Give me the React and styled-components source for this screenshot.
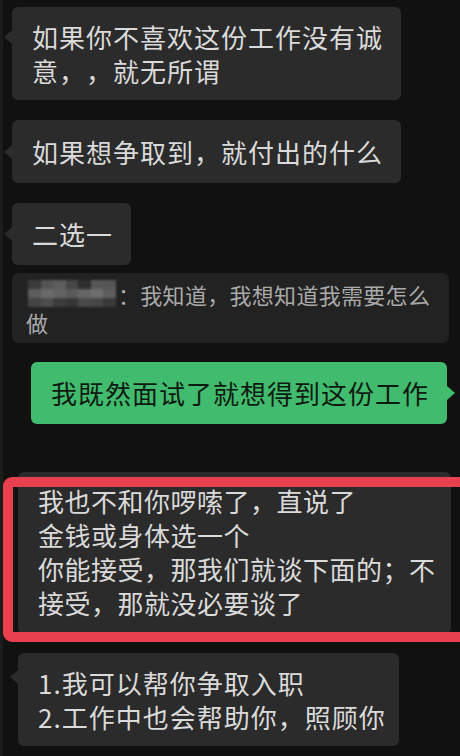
import React from "react";
import styled, { createGlobalStyle } from "styled-components";

const GlobalStyle = createGlobalStyle`
    html, body {
        margin: 0;
        padding: 0;
        background: #111111;
    }
    * {
        box-sizing: border-box;
    }
`;

const Screen = styled.div`
    position: relative;
    width: 460px;
    height: 756px;
    overflow: hidden;
    display: flex;
    flex-direction: column;
    padding-top: 7px;
    background: #111111;
    border-left: 3px solid #1c1c1c;
    font-family: "Noto Sans CJK SC", "Noto Sans", sans-serif;
    text-spacing-trim: space-all;
`;

const Row = styled.div`
    display: flex;
    justify-content: ${({ $mine }) => ($mine ? "flex-end" : "flex-start")};
    margin-top: ${({ $top }) => $top || 0}px;
    padding-left: ${({ $left }) => $left || 0}px;
    padding-right: ${({ $right }) => $right || 0}px;
`;

const Bubble = styled.div`
    position: relative;
    width: ${({ $w }) => ($w ? `${$w}px` : "auto")};
    padding: ${({ $pt }) => $pt ?? 14}px 18px ${({ $pb }) => $pb ?? 14}px 20px;
    background: ${({ $mine }) => ($mine ? "#41bb6d" : "#2b2b2b")};
    color: ${({ $mine }) => ($mine ? "#0e1a11" : "#dadada")};
    border-radius: 6px;
    font-size: 26px;
    line-height: 34px;
    letter-spacing: ${({ $ls }) => $ls ?? 1}px;
    white-space: nowrap;

    &::before {
        content: "";
        display: ${({ $tail }) => ($tail === undefined ? "none" : "block")};
        position: absolute;
        top: ${({ $tail }) => $tail || 0}px;
        ${({ $mine }) => ($mine ? "right: -8px;" : "left: -8px;")}
        border-top: 7px solid transparent;
        border-bottom: 7px solid transparent;
        ${({ $mine }) =>
            $mine
                ? "border-left: 8px solid #41bb6d;"
                : "border-right: 8px solid #2b2b2b;"}
    }
`;

const SystemNote = styled.div`
    width: 437px;
    padding: 7px 14px;
    background: #222222;
    border-radius: 6px;
    color: #a9a9a9;
    font-size: 22px;
    line-height: 28px;
    letter-spacing: 0.3px;
    white-space: nowrap;
`;

const Mosaic = styled.span`
    display: inline-flex;
    flex-wrap: wrap;
    width: 88px;
    height: 27px;
    margin-left: 2px;
    margin-right: 2px;
    vertical-align: top;
    filter: blur(1px);
`;

const Cell = styled.span`
    width: 12.57px;
    height: 9px;
    background: ${({ $c }) => $c};
`;

const Highlight = styled.div`
    position: absolute;
    top: 5px;
    left: -15px;
    right: -40px;
    bottom: -8px;
    border: 10px solid #e8404e;
    border-radius: 9px;
    pointer-events: none;
`;

const mosaicColors = [
    "#3a3a3a", "#555555", "#5c5c5c", "#474747", "#2e2e2e", "#575757", "#555555",
    "#5c5c5c", "#6a6a6a", "#636363", "#5a5a5a", "#656565", "#6e6e6e", "#5e5e5e",
    "#454545", "#4d4d4d", "#3c3c3c", "#353535", "#4a4a4a", "#474747", "#3a3a3a",
];

export default function App() {
    return (
        <>
            <GlobalStyle />
            <Screen>
                <Row $left={9}>
                    <Bubble $w={389} $tail={23} $pt={13} $pb={12}>
                        如果你不喜欢这份工作没有诚
                        <br />
                        意，，就无所谓
                    </Bubble>
                </Row>
                <Row $left={9} $top={20}>
                    <Bubble $w={389} $tail={25} $pt={15}>
                        如果想争取到，就付出的什么
                    </Bubble>
                </Row>
                <Row $left={9} $top={20}>
                    <Bubble $tail={24}>二选一</Bubble>
                </Row>
                <Row $left={9} $top={8}>
                    <SystemNote>
                        <Mosaic>
                            {mosaicColors.map((c, i) => (
                                <Cell key={i} $c={c} />
                            ))}
                        </Mosaic>
                        ：我知道，我想知道我需要怎么
                        <br />
                        做
                    </SystemNote>
                </Row>
                <Row $mine $right={13} $top={19}>
                    <Bubble $mine $w={416} $tail={24}>
                        我既然面试了就想得到这份工作
                    </Bubble>
                </Row>
                <Row $left={15} $top={48}>
                    <Bubble $w={433} $pt={12} $pb={14} $ls={0.5}>
                        我也不和你啰嗦了，直说了
                        <br />
                        金钱或身体选一个
                        <br />
                        你能接受，那我们就谈下面的；不
                        <br />
                        接受，那就没必要谈了
                        <Highlight />
                    </Bubble>
                </Row>
                <Row $left={15} $top={19}>
                    <Bubble $w={381} $tail={17} $pt={13} $pb={12}>
                        1.我可以帮你争取入职
                        <br />
                        2.工作中也会帮助你，照顾你
                    </Bubble>
                </Row>
            </Screen>
        </>
    );
}
